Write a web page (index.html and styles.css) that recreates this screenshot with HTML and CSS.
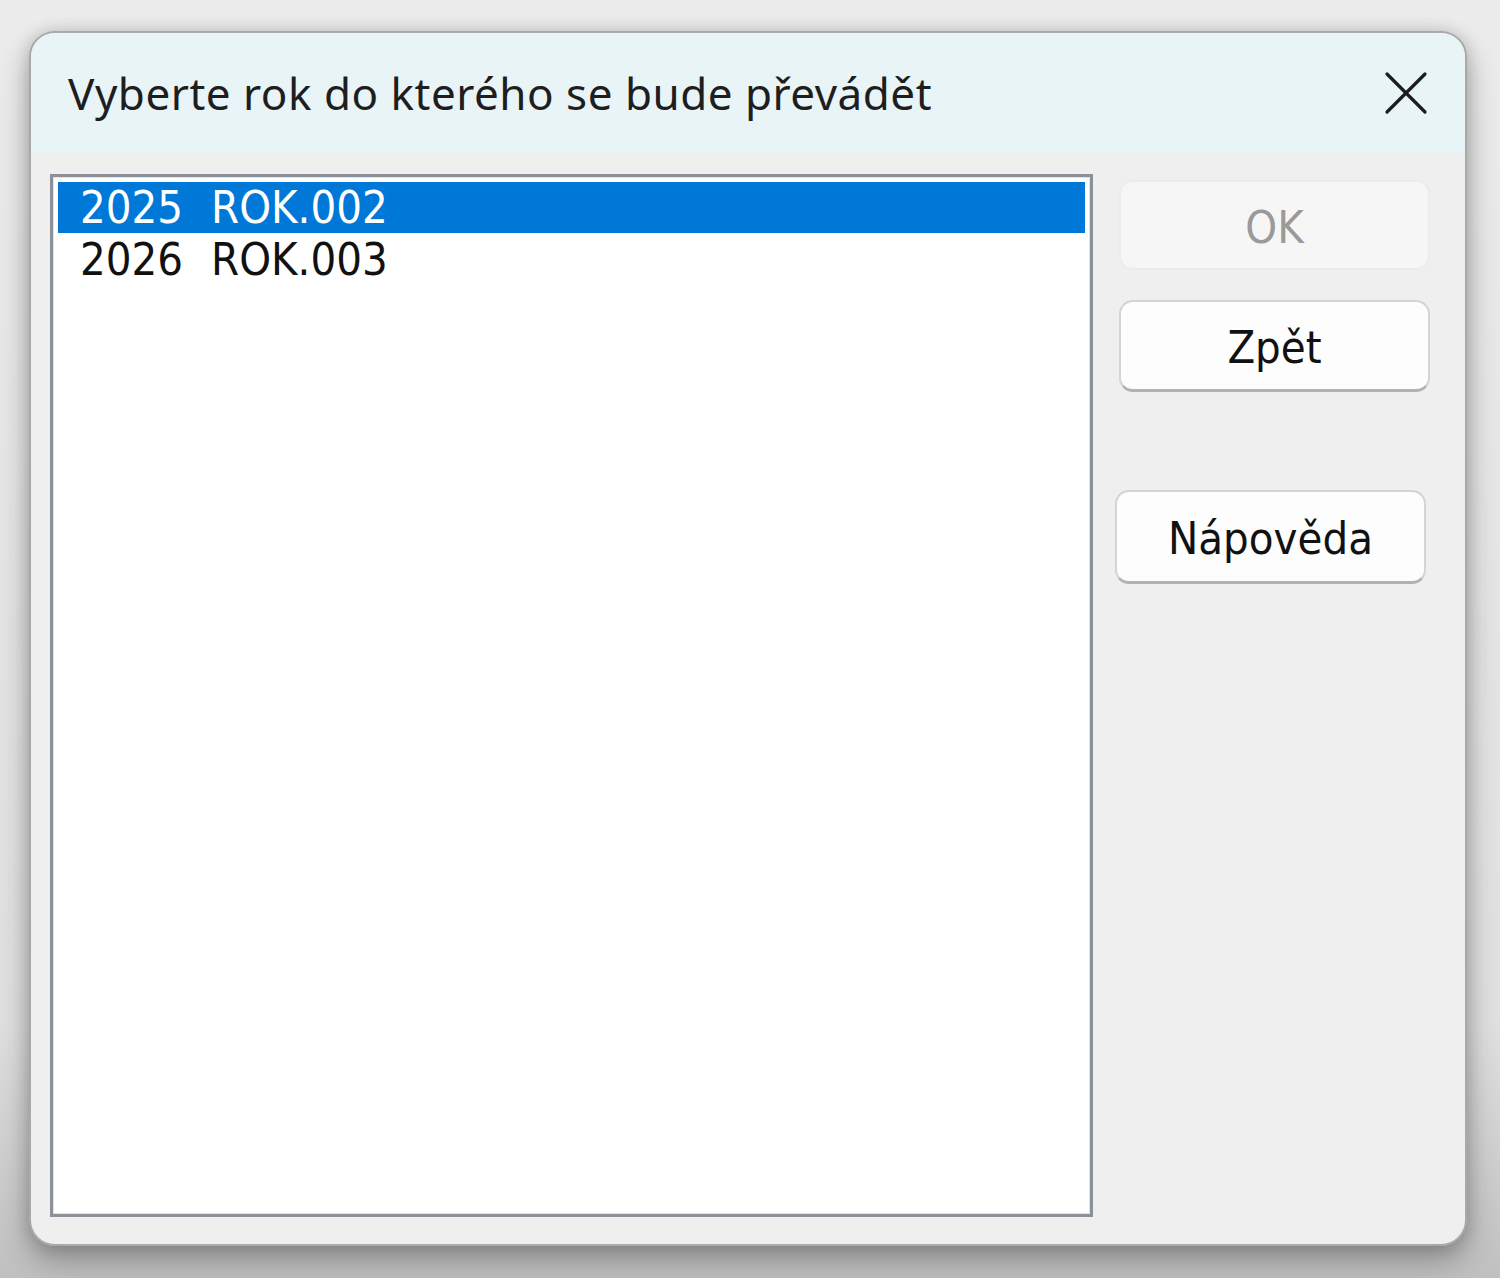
FILE: index.html
```html
<!DOCTYPE html>
<html lang="cs">
<head>
    <meta charset="UTF-8">
    <title>Vyberte rok</title>
    <link rel="stylesheet" href="styles.css">
</head>
<body>
    <div class="dialog">
        <header class="titlebar">
            <h1 class="title">Vyberte rok do kterého se bude převádět</h1>
            <button class="close-button" aria-label="Zavřít">
                <svg width="44" height="44" viewBox="0 0 44 44">
                    <path d="M3 3 L41 41 M41 3 L3 41" stroke="#1c1c1c" stroke-width="3.2" stroke-linecap="round"/>
                </svg>
            </button>
        </header>
        <div class="content">
            <div class="listbox">
                <div class="list-row selected"><span class="col-year">2025</span><span>ROK.002</span></div>
                <div class="list-row"><span class="col-year">2026</span><span>ROK.003</span></div>
            </div>
            <div class="buttons">
                <button class="btn btn-ok" disabled>OK</button>
                <button class="btn btn-back">Zpět</button>
                <button class="btn btn-help">Nápověda</button>
            </div>
        </div>
    </div>
</body>
</html>
```

FILE: styles.css
```css
html, body {
    margin: 0;
    padding: 0;
}

body {
    width: 1500px;
    height: 1278px;
    overflow: hidden;
    background: linear-gradient(to bottom, #ececec 0%, #e0e0e0 80%, #c0c0c0 100%);
    padding: 31px 0 0 29px;
    box-sizing: border-box;
}

.dialog {
    width: 1438px;
    height: 1215px;
    box-sizing: border-box;
    border: 2px solid #a9a9a9;
    border-radius: 26px;
    background-color: #efefef;
    overflow: hidden;
    box-shadow: 0 14px 30px rgba(0, 0, 0, 0.3), 0 0 16px rgba(0, 0, 0, 0.14);
    display: flex;
    flex-direction: column;
}

.titlebar {
    height: 120px;
    flex-shrink: 0;
    background-color: #e9f4f7;
    display: flex;
    align-items: center;
    justify-content: space-between;
    padding: 0 37px;
}

.title {
    margin: 0;
    font-family: "Noto Sans", "Open Sans", sans-serif;
    font-weight: normal;
    font-size: 44px;
    color: #1e1e1e;
    letter-spacing: 0.5px;
}

.close-button {
    background: none;
    border: none;
    padding: 0;
    width: 44px;
    height: 44px;
    cursor: pointer;
}

.content {
    flex-grow: 1;
    display: flex;
    padding: 21px 33px 27px 19px;
    gap: 22px;
}

.listbox {
    width: 1043px;
    height: 1043px;
    box-sizing: border-box;
    background-color: white;
    border: 3px solid #8c9099;
    box-shadow: inset 0 0 0 1px #dfe3ea;
    padding: 5px;
}

.list-row {
    height: 52px;
    display: flex;
    align-items: center;
    padding-left: 22px;
    font-family: "DejaVu Sans Condensed", sans-serif;
    font-size: 45px;
    color: #111111;
}

.list-row.selected {
    height: 51px;
    background-color: #0078d7;
    color: white;
}

.col-year {
    width: 131px;
}

.buttons {
    display: flex;
    flex-direction: column;
    width: 312px;
}

.btn {
    height: 90px;
    width: 311px;
    box-sizing: border-box;
    border-radius: 14px;
    background-color: #fdfdfd;
    border: 2px solid #d4d4d4;
    border-bottom: 3px solid #b2b2b2;
    font-family: "DejaVu Sans Condensed", sans-serif;
    font-size: 45px;
    color: #111111;
    padding: 4px 0 0 0;
    cursor: pointer;
}

.btn-ok {
    margin-top: 6px;
    margin-left: 4px;
    height: 90px;
    background-color: #f6f6f6;
    border: 2px solid #ececec;
    color: #9a9a9a;
}

.btn-back {
    margin-top: 30px;
    margin-left: 4px;
    height: 92px;
}

.btn-help {
    margin-top: 98px;
    height: 94px;
}
```
